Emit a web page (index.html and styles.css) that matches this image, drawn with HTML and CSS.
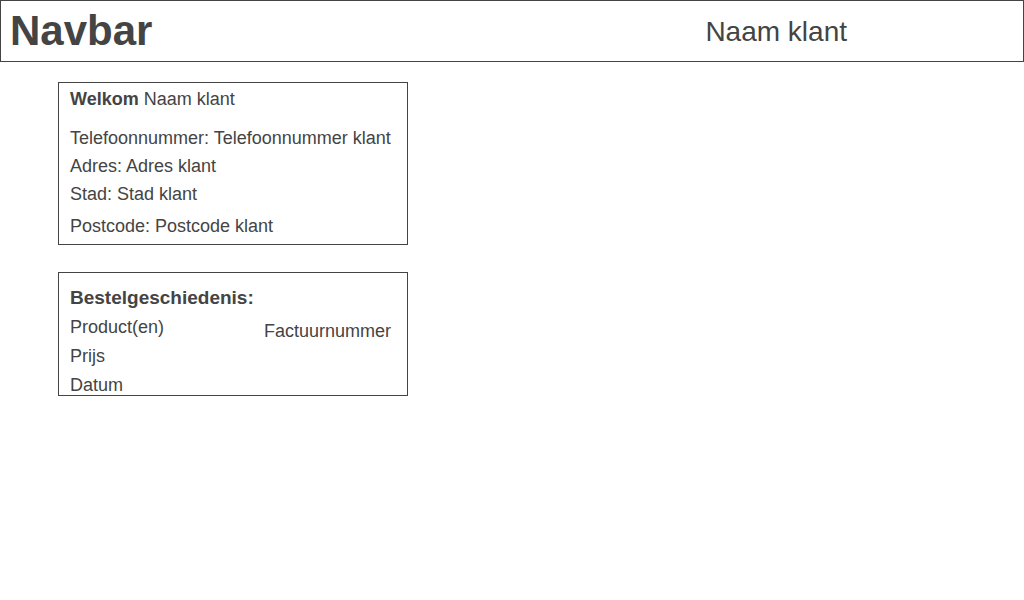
FILE: index.html
```html
<!DOCTYPE html>
<html lang="nl">
<head>
<meta charset="utf-8">
<title>Klant</title>
<link rel="stylesheet" href="styles.css">
</head>
<body>
<header class="navbar">
  <h1 class="brand">Navbar</h1>
  <span class="customer">Naam klant</span>
</header>
<main class="content">
  <section class="card">
    <p class="welcome"><strong>Welkom</strong> Naam klant</p>
    <p>Telefoonnummer: Telefoonnummer klant</p>
    <p>Adres: Adres klant</p>
    <p>Stad: Stad klant</p>
    <p class="postcode">Postcode: Postcode klant</p>
  </section>
  <section class="card history">
    <h2 class="title">Bestelgeschiedenis:</h2>
    <div class="order">
      <div class="details">
        <p>Product(en)</p>
        <p>Prijs</p>
        <p>Datum</p>
      </div>
      <p class="invoice">Factuurnummer</p>
    </div>
  </section>
</main>
</body>
</html>
```

FILE: styles.css
```css
* {
  box-sizing: border-box;
}

body {
  margin: 0;
  background: #fff;
  color: #444;
  font-family: "Liberation Sans", Arial, sans-serif;
  font-size: 18px;
  line-height: 20px;
}

h1,
h2,
p {
  margin: 0;
}

.navbar {
  display: flex;
  align-items: center;
  justify-content: space-between;
  padding: 5px 176px 5px 9px;
  border: 1px solid #444;
}

.brand {
  font-size: 42px;
  line-height: 48px;
}

.customer {
  padding-top: 2px;
  font-size: 28px;
  line-height: 48px;
}

.content {
  display: flex;
  flex-direction: column;
  align-items: flex-start;
  gap: 27px;
  padding: 20px 58px;
}

.card {
  display: flex;
  flex-direction: column;
  gap: 8px;
  width: 350px;
  max-width: 100%;
  padding: 6px 11px 8px;
  border: 1px solid #444;
}

.welcome {
  margin-bottom: 11px;
}

.postcode {
  margin-top: 4px;
}

.history {
  gap: 9px;
  padding: 15px 16px 0 11px;
}

.title {
  font-size: 19px;
}

.order {
  display: flex;
  justify-content: space-between;
}

.details {
  display: flex;
  flex-direction: column;
  gap: 9px;
}

.invoice {
  padding-top: 4px;
}
```
